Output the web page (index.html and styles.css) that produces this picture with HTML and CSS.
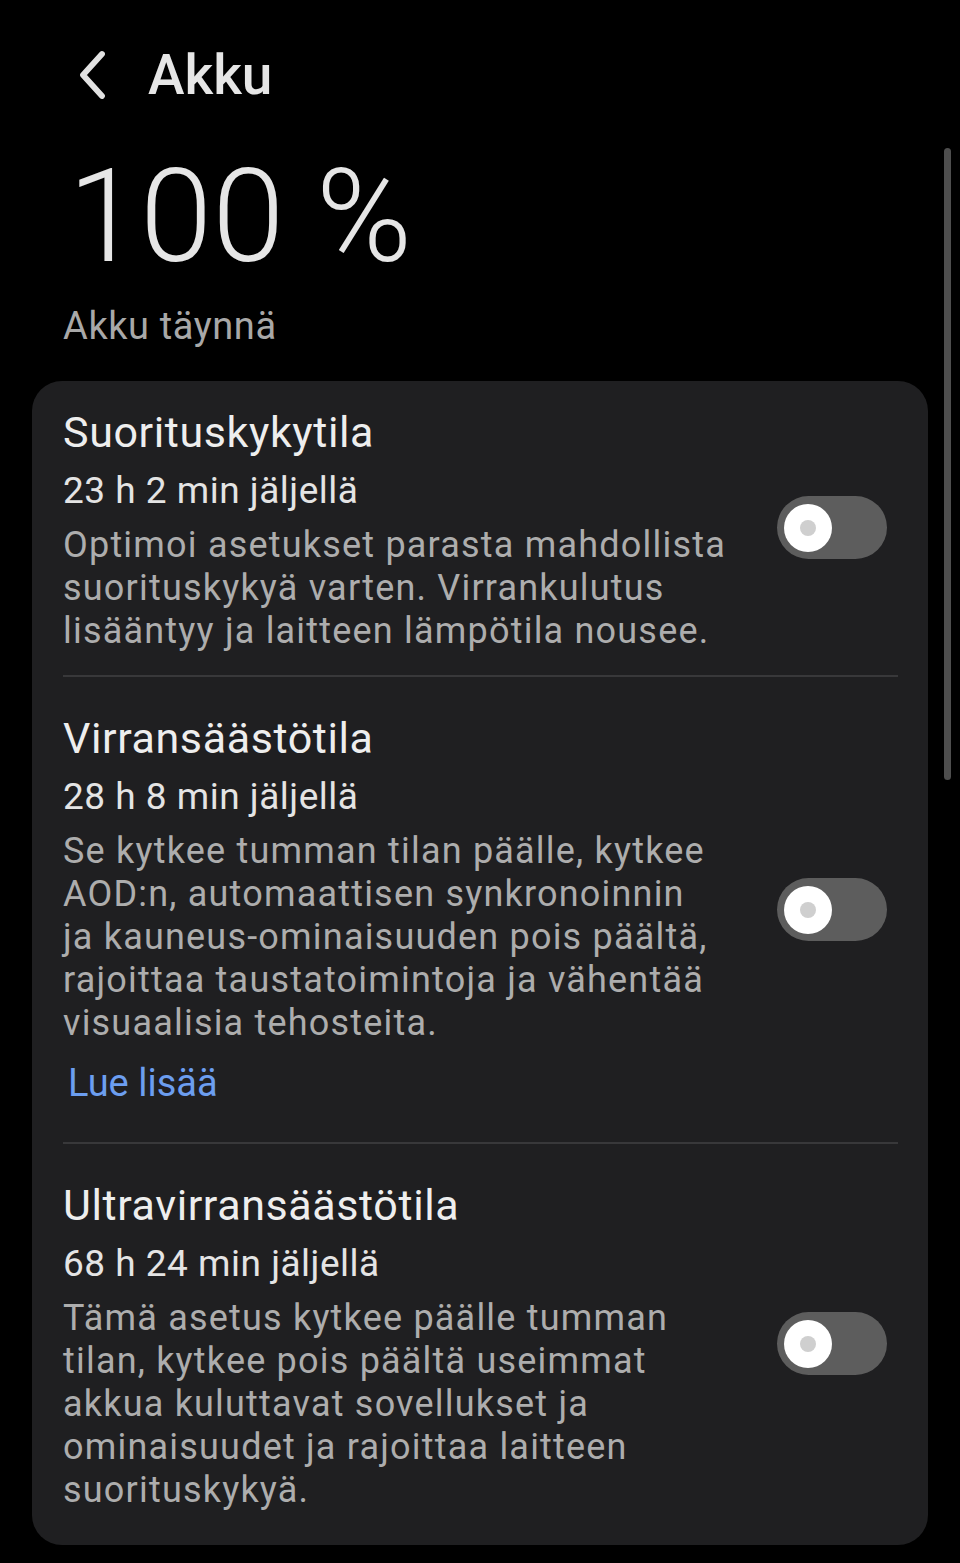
FILE: index.html
```html
<!DOCTYPE html>
<html lang="fi">
<head>
<meta charset="utf-8">
<title>Akku</title>
<link rel="stylesheet" href="styles.css">
</head>
<body>
<div class="screen">
  <header class="topbar">
    <span class="back" aria-label="Takaisin">
      <svg width="30" height="50" viewBox="0 0 30 50"><path d="M23 4 L4 25 L23 46" fill="none" stroke="#e2e2e2" stroke-width="5.8" stroke-linecap="round" stroke-linejoin="round"/></svg>
    </span>
    <h1 class="title">Akku</h1>
  </header>

  <div class="level">100&nbsp;%</div>
  <div class="status">Akku täynnä</div>

  <section class="card">
    <div class="item item-first">
      <div class="text">
        <div class="name">Suorituskykytila</div>
        <div class="time">23 h 2 min jäljellä</div>
        <div class="desc">Optimoi asetukset parasta mahdollista<br>suorituskykyä varten. Virrankulutus<br>lisääntyy ja laitteen lämpötila nousee.</div>
      </div>
      <span class="switch"><span class="knob"></span></span>
    </div>

    <div class="item item-link">
      <div class="text">
        <div class="name">Virransäästötila</div>
        <div class="time">28 h 8 min jäljellä</div>
        <div class="desc">Se kytkee tumman tilan päälle, kytkee<br>AOD:n, automaattisen synkronoinnin<br>ja kauneus-ominaisuuden pois päältä,<br>rajoittaa taustatoimintoja ja vähentää<br>visuaalisia tehosteita.</div>
        <a class="more" href="#">Lue lisää</a>
      </div>
      <span class="switch"><span class="knob"></span></span>
    </div>

    <div class="item item-last">
      <div class="text">
        <div class="name">Ultravirransäästötila</div>
        <div class="time">68 h 24 min jäljellä</div>
        <div class="desc">Tämä asetus kytkee päälle tumman<br>tilan, kytkee pois päältä useimmat<br>akkua kuluttavat sovellukset ja<br>ominaisuudet ja rajoittaa laitteen<br>suorituskykyä.</div>
      </div>
      <span class="switch"><span class="knob"></span></span>
    </div>
  </section>

  <div class="scrollbar"></div>
</div>
</body>
</html>
```

FILE: styles.css
```css
* { box-sizing: border-box; }

html, body {
  margin: 0;
  padding: 0;
  background: #000;
}

body {
  font-family: Roboto, "Noto Sans", "DejaVu Sans", sans-serif;
  color: #ececec;
}

.screen {
  position: relative;
  width: 960px;
  height: 1563px;
  overflow: hidden;
  padding-top: 39px;
}

.topbar {
  display: flex;
  align-items: center;
  height: 72px;
  padding-left: 79px;
}

.back {
  display: flex;
  width: 30px;
  height: 50px;
}

.title {
  margin: 0 0 0 39px;
  font-size: 55px;
  font-weight: 500;
  line-height: 72px;
  color: #e6e6e6;
}

.level {
  margin-top: 31px;
  padding-left: 68px;
  font-size: 130px;
  font-weight: 300;
  line-height: 150px;
  color: #e6e6e6;
}

.status {
  margin-top: 13px;
  padding-left: 63px;
  font-size: 38px;
  line-height: 43px;
  letter-spacing: 0.6px;
  color: #a8a8a8;
}

.card {
  margin: 33px 32px 0;
  padding: 0 30px 0 31px;
  background: #1f1f21;
  border-radius: 30px;
}

.item {
  display: flex;
  align-items: center;
  padding: 31px 0 31px;
}

.item + .item {
  border-top: 2px solid #38383a;
}

.item-first {
  padding-top: 21px;
  padding-bottom: 22px;
}

.item-last {
  padding-bottom: 33px;
}

.text {
  flex: 1;
  min-width: 0;
}

.name {
  font-size: 43px;
  line-height: 60px;
  letter-spacing: 0.6px;
  color: #eeeeee;
}

.time {
  font-size: 37px;
  line-height: 58px;
  letter-spacing: 0.5px;
  color: #e4e4e4;
}

.desc {
  margin-top: 4px;
  font-size: 36px;
  line-height: 43px;
  letter-spacing: 1.2px;
  color: #adadad;
}

.more {
  display: block;
  margin: 17px 0 6px 5px;
  font-size: 38px;
  line-height: 43px;
  color: #6c9ef0;
  text-decoration: none;
}

.switch {
  position: relative;
  flex: none;
  width: 110px;
  height: 63px;
  margin: 0 11px 0 20px;
  border-radius: 32px;
  background: #5d5d5d;
}

.knob {
  position: absolute;
  left: 7px;
  top: 7.5px;
  width: 48px;
  height: 48px;
  border-radius: 50%;
  background: #ffffff;
}

.knob::after {
  content: "";
  position: absolute;
  left: 16px;
  top: 16px;
  width: 16px;
  height: 16px;
  border-radius: 50%;
  background: #cfcfcf;
}

.scrollbar {
  position: absolute;
  left: 944px;
  top: 148px;
  width: 7px;
  height: 632px;
  border-radius: 4px;
  background: #4e4e4e;
}
```
